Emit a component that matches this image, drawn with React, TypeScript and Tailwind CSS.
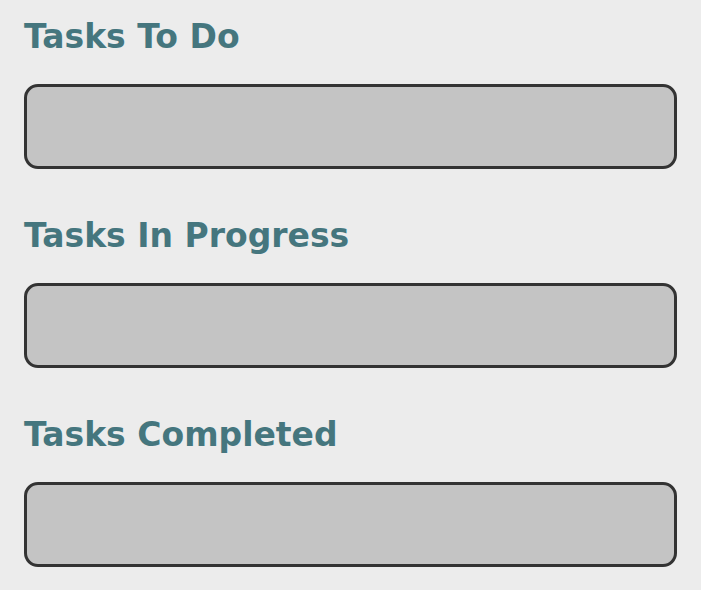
export default function App() {
  const lists = ["Tasks To Do", "Tasks In Progress", "Tasks Completed"];

  return (
    <div className="min-h-[590px] bg-[#ececec] px-6 pt-[14px] font-['DejaVu_Sans',Verdana,sans-serif]">
      {lists.map(title => (
        <section key={title} className="mb-[44px]">
          <h2 className="text-[33px] font-bold leading-[46px] text-[#45767e]">{title}</h2>
          <div className="mt-[24px] h-[85px] rounded-[14px] border-[3px] border-[#333333] bg-[#c4c4c4]" />
        </section>
      ))}
    </div>
  );
}
